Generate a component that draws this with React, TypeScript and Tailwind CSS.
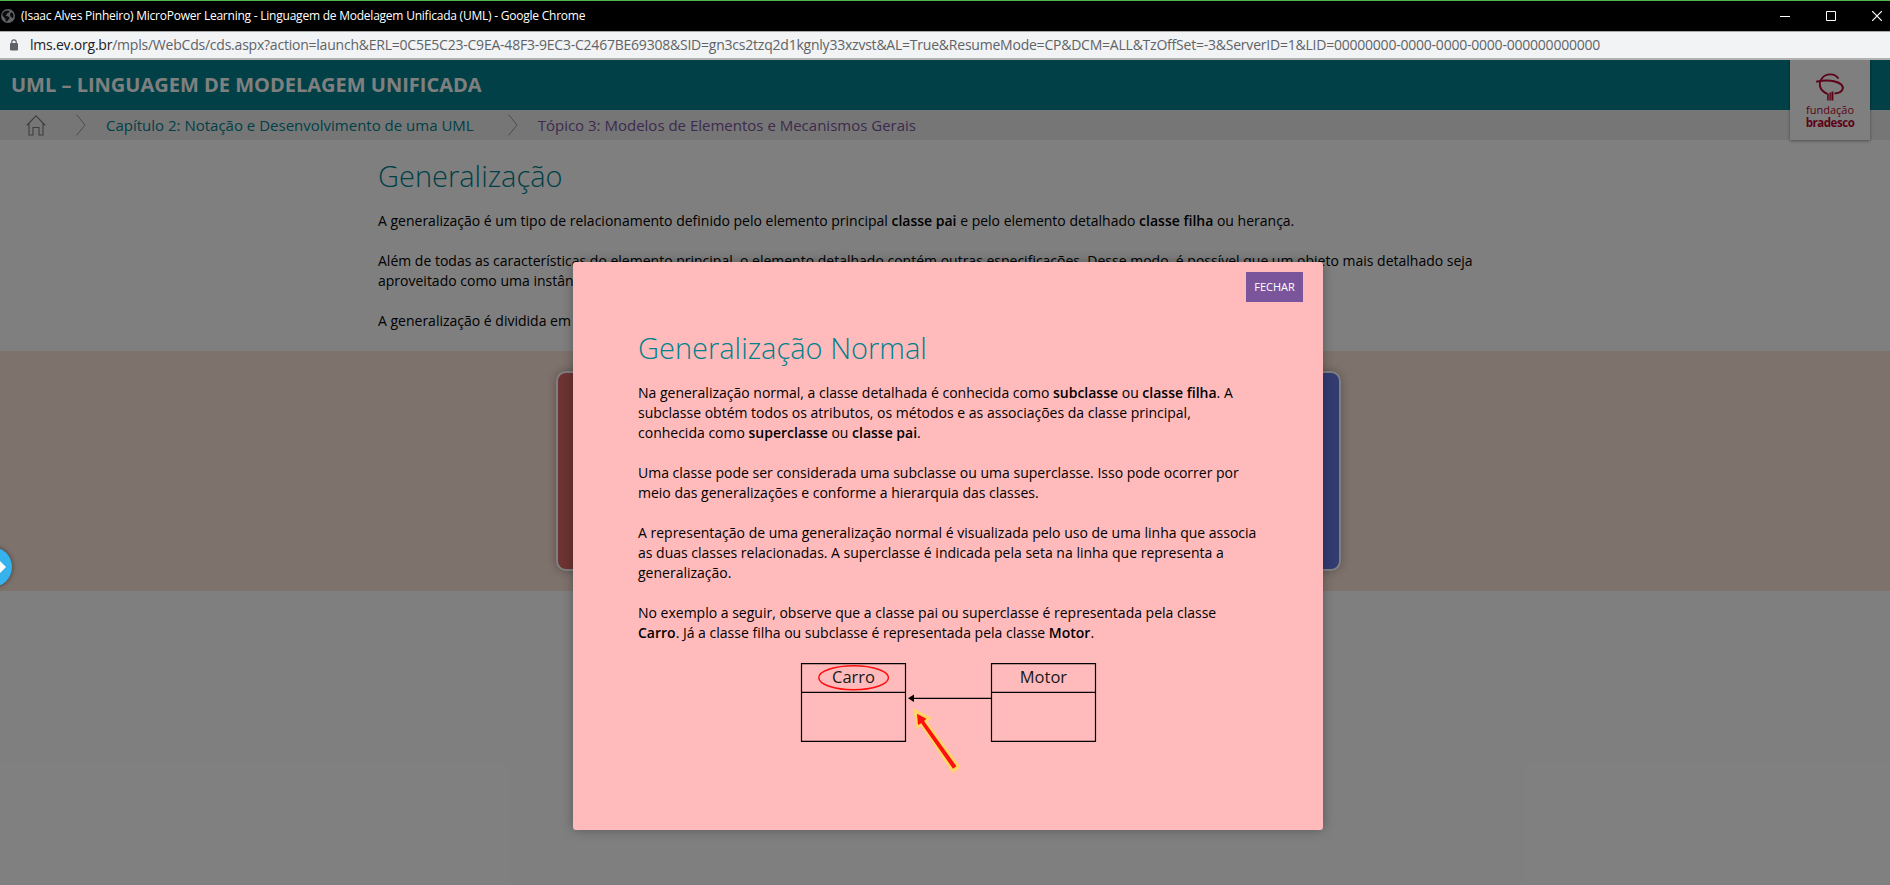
import React from "react";

function TitleBar() {
  return (
    <div className="flex h-8 items-center border-t border-b border-t-[#4fb84a] border-b-[#a8a8a8] bg-black text-white">
      <svg className="ml-px shrink-0" width="14" height="14" viewBox="0 0 14 14">
        <circle cx="7" cy="7" r="7" fill="#5f6368" />
        <path d="M1.500 4.500C2.500 2.800 4 1.800 6.500 1.400L8.500 2 8.200 3.200 6.200 4.200 5.800 5.600 4.400 6.400 6.500 7.200 8.500 8.200 8.300 9.800 6.800 11.200 6.200 12.600 4.600 12 4.400 9.800 2.600 8 1.400 6.400Z" fill="#0c0c0c" />
        <path d="M9.200 4.400 10.800 3.200 12 4.600 12.600 7 11.800 9.200 10.600 8.200 9.200 7.200Z" fill="#0c0c0c" />
      </svg>
      <span className="ml-1.5 whitespace-nowrap text-xs tracking-[-0.23px]">
        (Isaac Alves Pinheiro) MicroPower Learning - Linguagem de Modelagem Unificada (UML) - Google Chrome
      </span>
      <div className="ml-auto flex items-center gap-9 pr-2">
        <svg width="10" height="10" viewBox="0 0 10 10"><path d="M0 5.500H10" stroke="#fff" /></svg>
        <svg width="10" height="10" viewBox="0 0 10 10"><path d="M.5.5H9.500V9.500H.5Z" fill="none" stroke="#fff" /></svg>
        <svg width="10" height="10" viewBox="0 0 10 10"><path d="M0 0L10 10M10 0L0 10" stroke="#fff" strokeWidth="1.200" /></svg>
      </div>
    </div>
  );
}

function AddressBar() {
  return (
    <div className="flex h-7 items-center border-b-2 border-[#b0b0b0] bg-[#f1f3f4] pl-[9px]">
      <svg className="shrink-0" width="10" height="12" viewBox="0 0 10 12">
        <rect x="1" y="4" width="8" height="7.500" rx="1" fill="#5f6368" />
        <path d="M2.800 4.500V3A2.200 2.200 0 0 1 7.200 3V4.500" fill="none" stroke="#5f6368" strokeWidth="1.200" />
      </svg>
      <span className="ml-[11px] whitespace-nowrap text-sm tracking-[-0.223px] text-[#5f6368]">
        <span className="text-[#202124]">lms.ev.org.br</span>
        /mpls/WebCds/cds.aspx?action=launch&amp;ERL=0C5E5C23-C9EA-48F3-9EC3-C2467BE69308&amp;SID=gn3cs2tzq2d1kgnly33xzvst&amp;AL=True&amp;ResumeMode=CP&amp;DCM=ALL&amp;TzOffSet=-3&amp;ServerID=1&amp;LID=00000000-0000-0000-0000-000000000000
      </span>
    </div>
  );
}

function Chevron() {
  return (
    <svg className="shrink-0" width="10" height="22" viewBox="0 0 10 22">
      <path d="M.5.500L9 11 .5 21.500" fill="none" stroke="#999" />
    </svg>
  );
}

function Logo() {
  return (
    <div className="absolute right-5 top-0 flex h-20 w-20 flex-col items-center bg-white pt-3 text-[#b8062f] shadow-[0_1px_3px_rgba(0,0,0,0.4)]">
      <svg width="30" height="29" viewBox="0 0 30 29">
        <path d="M23.500 6.500C20 1.300 11.500.800 7.200 6 2.500 12 5 19 12.500 21.800" fill="none" stroke="currentColor" strokeWidth="1.900" />
        <path d="M1.200 9.800C9 8 14 8.100 19 9.200 26 10.700 29.500 14.500 27 18.300 25.800 20.200 23 21.300 19.500 21.600" fill="none" stroke="currentColor" strokeWidth="2" />
        <path d="M12.200 21.800 13.700 21.200V28.500H12.200ZM14.400 20.800 15.800 20.200V28.500H14.400ZM16.400 19.900 18.400 19.200V28.500H16.400Z" fill="currentColor" />
      </svg>
      <span className="mt-0.5 text-[11px] leading-[13px]">fundação</span>
      <span className="text-[11.5px] font-bold leading-[13px] tracking-[-0.45px]">bradesco</span>
    </div>
  );
}

function Page() {
  return (
    <div className="flex h-full flex-col bg-white text-black">
      <header className="flex h-[50px] shrink-0 items-center bg-[#00818d] pl-[11px] shadow-[0_1px_3px_rgba(0,0,0,0.4)]">
        <h1 className="text-xl font-bold text-white">UML – LINGUAGEM DE MODELAGEM UNIFICADA</h1>
      </header>
      <nav className="flex h-[30px] shrink-0 items-center bg-[#ededed] pl-[26px] text-[15px]">
        <svg className="shrink-0" width="20" height="21" viewBox="0 0 20 21">
          <path d="M.7 10.500 10 .9 19.300 10.500M3 8.500V20H7V12.500H13V20H17V8.500" fill="none" stroke="#7a7a7a" strokeWidth="1.100" />
        </svg>
        <div className="ml-[30px] flex"><Chevron /></div>
        <span className="ml-5 whitespace-nowrap text-[#00818d]">Capítulo 2: Notação e Desenvolvimento de uma UML</span>
        <div className="ml-[34px] flex"><Chevron /></div>
        <span className="ml-5 whitespace-nowrap text-[#7b559c]">Tópico 3: Modelos de Elementos e Mecanismos Gerais</span>
      </nav>
      <main className="flex flex-col">
        <section className="mx-auto w-[1134px] pt-4 text-sm leading-5">
          <h2 className="text-[29px] font-light leading-10 text-[#00818d]">Generalização</h2>
          <div className="mt-[15px] flex flex-col gap-5">
            <p>
              A generalização é um tipo de relacionamento definido pelo elemento principal <b className="font-semibold">classe pai</b> e pelo elemento detalhado <b className="font-semibold">classe filha</b> ou herança.
            </p>
            <p>
              Além de todas as características do elemento principal, o elemento detalhado contém outras especificações. Desse modo, é possível que um objeto mais detalhado seja
              <br />
              aproveitado como uma instância
            </p>
            <p>A generalização é dividida em</p>
          </div>
        </section>
        <section className="mt-5 flex h-60 items-start justify-center bg-[#fde4d9] pl-[7px] pt-5">
          <div className="flex w-[785px] justify-between">
            <div className="h-[200px] w-[385px] rounded-[10px] border-2 border-white bg-[#dc6666] shadow-[0_0_10px_rgba(0,0,0,0.3)]" />
            <div className="h-[200px] w-[385px] rounded-[10px] border-2 border-white bg-[#6478e2] shadow-[0_0_10px_rgba(0,0,0,0.3)]" />
          </div>
        </section>
      </main>
      <Logo />
    </div>
  );
}

function Diagram() {
  return (
    <svg className="mx-auto mt-5 block" width="298" height="112" viewBox="0 0 298 112">
      <g fill="none" stroke="#000" strokeWidth="1.200">
        <path d="M2.500.6H106.500V78.300H2.500ZM2.500 29.400H106.500M192.500.6H296.500V78.300H192.500ZM192.500 29.400H296.500" />
        <path d="M113 35.300H192" />
      </g>
      <path d="M109 35.300 115 31.500V39Z" />
      <g fontSize="16.500" textAnchor="middle" fill="#181818">
        <text x="54.500" y="20">Carro</text>
        <text x="244.400" y="20">Motor</text>
      </g>
      <ellipse cx="54.600" cy="14.800" rx="34.800" ry="12" fill="none" stroke="#ff0d0d" strokeWidth="1.500" />
      <path d="M114.300 45.300 133 55.300 128 58.200 161.300 104 153.700 110.300 122 63 117.700 66.300Z" fill="#ffd766" />
      <path d="M118 50.700 127.500 55.800 125 58 157.500 103.300 154 105.700 122.200 60.200 119 62Z" fill="#ff1010" />
    </svg>
  );
}

function Modal() {
  return (
    <div className="absolute left-[573px] top-[202px] z-20 flex h-[568px] w-[750px] flex-col rounded-[3px] bg-[#ffbbbb] pt-2.5 text-sm leading-5 text-black shadow-[0_0_12px_rgba(0,0,0,0.3)]">
      <button className="mr-5 flex h-[30px] w-[57px] items-center justify-center self-end bg-[#7b559c] text-[11px] text-white">
        FECHAR
      </button>
      <div className="px-[65px] pt-[26px]">
        <h2 className="text-[29px] font-light leading-10 text-[#00818d]">Generalização Normal</h2>
        <div className="mt-[15px] flex flex-col gap-5 whitespace-nowrap">
          <p>
            Na generalização normal, a classe detalhada é conhecida como <b className="font-semibold">subclasse</b> ou <b className="font-semibold">classe filha</b>. A<br />
            subclasse obtém todos os atributos, os métodos e as associações da classe principal,<br />
            conhecida como <b className="font-semibold">superclasse</b> ou <b className="font-semibold">classe pai</b>.
          </p>
          <p>
            Uma classe pode ser considerada uma subclasse ou uma superclasse. Isso pode ocorrer por<br />
            meio das generalizações e conforme a hierarquia das classes.
          </p>
          <p>
            A representação de uma generalização normal é visualizada pelo uso de uma linha que associa<br />
            as duas classes relacionadas. A superclasse é indicada pela seta na linha que representa a<br />
            generalização.
          </p>
          <p>
            No exemplo a seguir, observe que a classe pai ou superclasse é representada pela classe<br />
            <b className="font-semibold">Carro</b>. Já a classe filha ou subclasse é representada pela classe <b className="font-semibold">Motor</b>.
          </p>
        </div>
        <Diagram />
      </div>
    </div>
  );
}

export default function App() {
  return (
    <div className="flex h-[885px] w-[1890px] flex-col overflow-hidden font-['Open_Sans',sans-serif]">
      <TitleBar />
      <AddressBar />
      <div className="relative h-[825px] overflow-hidden">
        <Page />
        <div className="absolute inset-0 z-10 bg-black/50" />
        <Modal />
        <button className="absolute -left-7 top-[487px] z-20 flex h-10 w-10 items-center justify-end rounded-full bg-[#36b3ec] pr-1.5 shadow-[0_0_5px_rgba(0,0,0,0.5)]" aria-label="Abrir menu">
          <svg width="9" height="12" viewBox="0 0 9 12"><path d="M3 0 9 6 3 12V8.500H0V3.500H3Z" fill="#fff" /></svg>
        </button>
      </div>
    </div>
  );
}
